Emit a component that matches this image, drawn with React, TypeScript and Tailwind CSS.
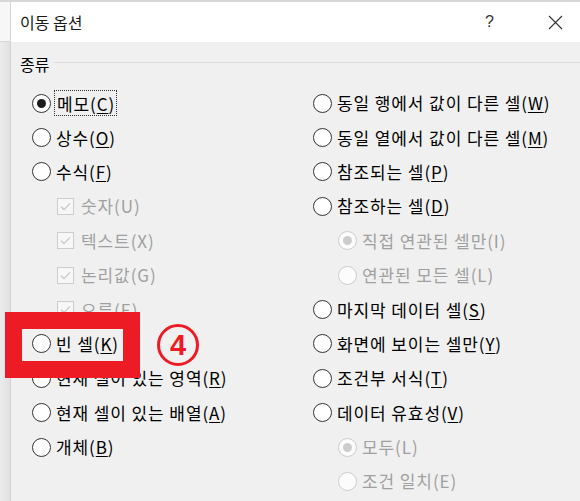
import React from "react";

const FONT = { fontFamily: '"Noto Sans CJK KR", "Noto Sans", sans-serif' };

function Label({ text, m, disabled }: { text: string; m: string; disabled?: boolean }) {
  return (
    <span className={`text-[17px] leading-none tracking-[0.9px] whitespace-nowrap ${disabled ? "text-[#a0a0a0]" : "text-black"}`}>
      {text}(<span className={disabled ? "" : "underline underline-offset-2"}>{m}</span>)
    </span>
  );
}

function Radio({ checked, disabled }: { checked?: boolean; disabled?: boolean }) {
  return (
    <span
      className={`flex h-[19px] w-[19px] shrink-0 items-center justify-center rounded-full border ${
        disabled ? "border-[#cccccc] bg-[#fcfcfc]" : "border-[#333333] bg-white"
      }`}
    >
      {checked && (
        <span className={`h-[9px] w-[9px] rounded-full ${disabled ? "bg-[#cccccc]" : "bg-[#1a1a1a]"}`} />
      )}
    </span>
  );
}

function Check() {
  return (
    <span className="flex h-[17px] w-[17px] shrink-0 items-center justify-center border border-[#cccccc] bg-[#f7f7f7]">
      <svg width="13" height="13" viewBox="0 0 13 13">
        <path d="M2 6.8 L5 9.6 L11 3.4" fill="none" stroke="#c6c6c6" strokeWidth="1.3" />
      </svg>
    </span>
  );
}

type Item = { kind: "radio" | "check"; text: string; m: string; checked?: boolean; disabled?: boolean; indent?: boolean; focus?: boolean };

const left: Item[] = [
  { kind: "radio", text: "메모", m: "C", checked: true, focus: true },
  { kind: "radio", text: "상수", m: "O" },
  { kind: "radio", text: "수식", m: "F" },
  { kind: "check", text: "숫자", m: "U", disabled: true, indent: true },
  { kind: "check", text: "텍스트", m: "X", disabled: true, indent: true },
  { kind: "check", text: "논리값", m: "G", disabled: true, indent: true },
  { kind: "check", text: "오류", m: "E", disabled: true, indent: true },
  { kind: "radio", text: "빈 셀", m: "K" },
  { kind: "radio", text: "현재 셀이 있는 영역", m: "R" },
  { kind: "radio", text: "현재 셀이 있는 배열", m: "A" },
  { kind: "radio", text: "개체", m: "B" },
];

const right: Item[] = [
  { kind: "radio", text: "동일 행에서 값이 다른 셀", m: "W" },
  { kind: "radio", text: "동일 열에서 값이 다른 셀", m: "M" },
  { kind: "radio", text: "참조되는 셀", m: "P" },
  { kind: "radio", text: "참조하는 셀", m: "D" },
  { kind: "radio", text: "직접 연관된 셀만", m: "I", disabled: true, indent: true, checked: true },
  { kind: "radio", text: "연관된 모든 셀", m: "L", disabled: true, indent: true },
  { kind: "radio", text: "마지막 데이터 셀", m: "S" },
  { kind: "radio", text: "화면에 보이는 셀만", m: "Y" },
  { kind: "radio", text: "조건부 서식", m: "T" },
  { kind: "radio", text: "데이터 유효성", m: "V" },
  { kind: "radio", text: "모두", m: "L", disabled: true, indent: true, checked: true },
  { kind: "radio", text: "조건 일치", m: "E", disabled: true, indent: true },
];

function Row({ it }: { it: Item }) {
  return (
    <div className={`flex h-[34.4px] items-center ${it.indent ? "pl-[25px]" : ""}`}>
      {it.kind === "radio" ? <Radio checked={it.checked} disabled={it.disabled} /> : <Check />}
      {it.focus ? (
        <span className="ml-[3px] flex h-[26px] items-center border border-dotted border-[#333] pl-[2px] pr-[1px]">
          <Label text={it.text} m={it.m} disabled={it.disabled} />
        </span>
      ) : (
        <span className={it.kind === "check" ? "ml-[7px]" : "ml-[5px]"}>
          <Label text={it.text} m={it.m} disabled={it.disabled} />
        </span>
      )}
    </div>
  );
}

export default function App() {
  return (
    <div className="relative h-[501px] w-[580px] overflow-hidden bg-[#f0f0f0]" style={FONT}>
      <div className="h-[2px] w-full bg-[#d8d8d8]" />
      <div className="flex h-[499px]">
        <div className="flex w-[10px] flex-col">
          <div className="h-[40px] border-b border-[#d6d6d6] bg-[#f7f7f7]" />
          <div className="flex-1 bg-gradient-to-r from-[#ececec] to-[#e0e0e0]" />
        </div>
        <div className="flex flex-1 flex-col border-l border-[#d4d4d4]">
          <div className="flex h-[40px] items-center bg-white pl-[9px]">
            <span className="text-[16px] text-[#1a1a1a]">이동 옵션</span>
            <span className="ml-auto text-[16px] text-[#333]" style={{ fontFamily: '"Liberation Sans", sans-serif' }}>?</span>
            <svg className="ml-[54px] mr-[17px]" width="15" height="15" viewBox="0 0 15 15">
              <path d="M1 1 L14 14 M14 1 L1 14" stroke="#333" strokeWidth="1.1" />
            </svg>
          </div>
          <div className="flex-1 bg-[#f0f0f0]">
            <div className="flex h-[44px] items-center pl-[9px]">
              <span className="text-[16px] text-black">종류</span>
              <div className="ml-[5px] mt-[-4px] h-px flex-1 bg-[#dcdcdc]" />
            </div>
            <div className="grid grid-cols-[281px_1fr] pl-[21px]">
              <div className="flex flex-col">
                {left.map((it, i) => (
                  <Row key={i} it={it} />
                ))}
              </div>
              <div className="flex flex-col">
                {right.map((it, i) => (
                  <Row key={i} it={it} />
                ))}
              </div>
            </div>
          </div>
        </div>
      </div>

      <div className="absolute left-[5px] top-[312px] h-[66px] w-[135px] border-[17px] border-[#ed1c24]" />
      <div
        className="absolute left-[157px] top-[324px] flex h-[42px] w-[42px] items-center justify-center rounded-full border-[3px] border-[#ed1c24] text-[29px] font-bold leading-none text-[#ed1c24]"
        style={{ fontFamily: '"Liberation Sans", sans-serif' }}
      >
        4
      </div>
    </div>
  );
}
